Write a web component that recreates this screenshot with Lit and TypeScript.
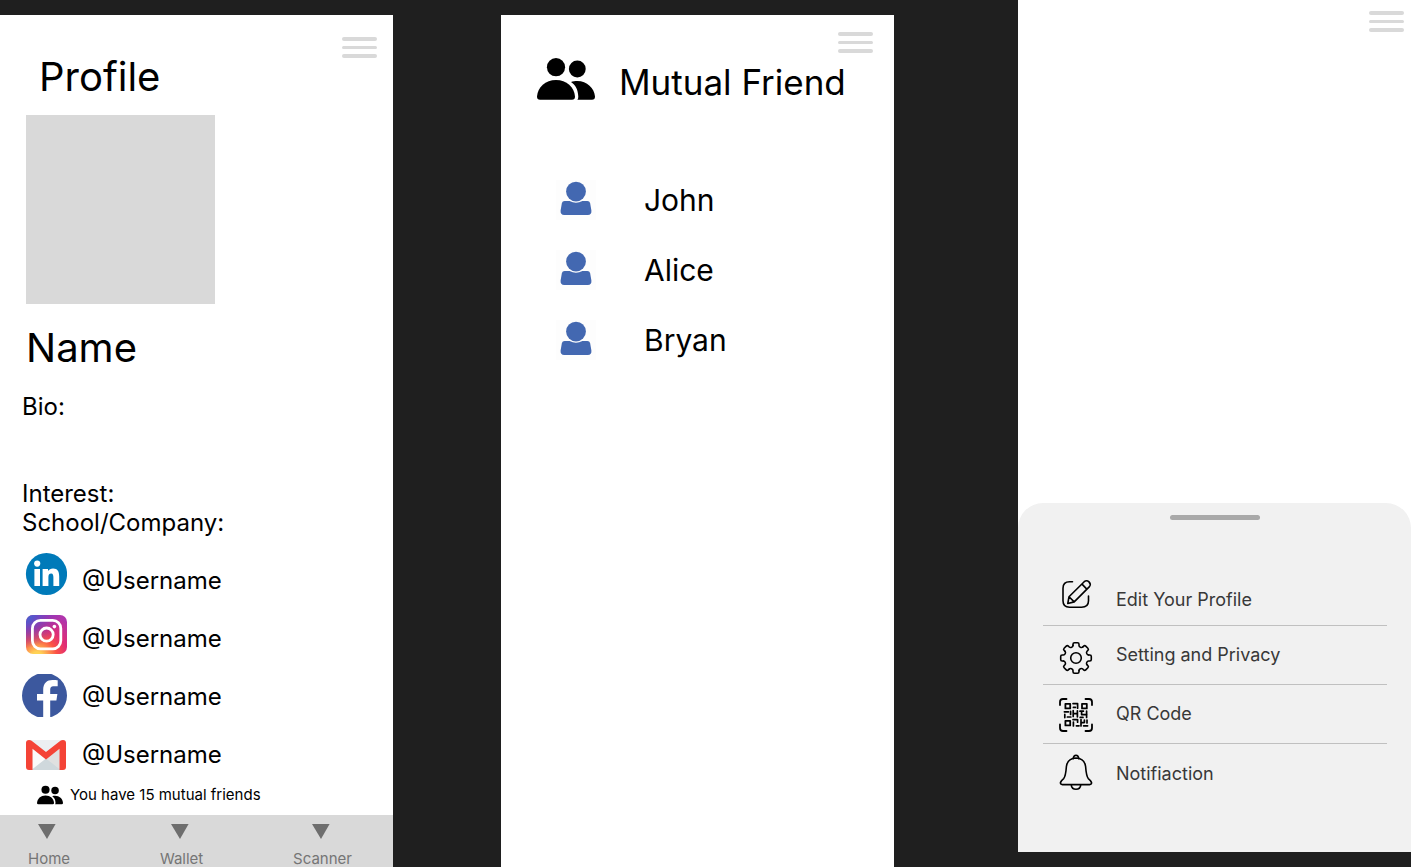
import { LitElement, html, css, svg, TemplateResult } from "lit";
import { customElement, property } from "lit/decorators.js";

const peopleIcon = html`<svg class="people" viewBox="0 0 58 42" aria-hidden="true">
  <circle cx="19" cy="9.2" r="9.1" />
  <circle cx="40.3" cy="11" r="8.4" />
  <path d="M3 41.8Q0 41.8 0 38.6C.6 29 8.5 22 19 22S37.4 29 38 38.6Q38 41.8 35 41.8Z" />
  <path d="M34 24C36 23.2 38 22.9 40.3 22.9C50 22.9 57.4 30 58 38.6Q58 41.8 55 41.8H40.4Q41.4 40.5 41.3 38.4C41 31.5 38.5 27 34 24Z" />
</svg>`;

const personIcon = html`<svg class="person" viewBox="0 1 40 40" aria-hidden="true">
  <rect y="1" width="40" height="40" fill="#fdfdfd" />
  <circle cx="20" cy="12.6" r="9.9" fill="#4368b1" />
  <path fill="#4368b1" d="M8.6 22H13.6Q20 25.6 26.4 22H31.4Q33.6 22 34.1 24L35.4 31.6Q35.8 36 31.8 36H8.2Q4.2 36 4.6 31.6L5.9 24Q6.4 22 8.6 22Z" />
</svg>`;

const arrowIcon = html`<svg class="arrow" viewBox="0 0 18 15" aria-hidden="true">
  <path d="M0 0H17.6L9 15Z" fill="#6e6e6e" />
</svg>`;

const linkedin = svg`
  <ellipse cx="24.5" cy="22" rx="20.6" ry="21" fill="#007ab9" />
  <circle cx="15.2" cy="11.6" r="3.1" fill="#fff" />
  <path fill="#fff" d="M12.4 17H18V34H12.4ZM20.6 17H26V19C27 17.4 28.8 16.4 31 16.4C35.8 16.4 37.2 19.6 37.2 24.2V34H31.4V25.4C31.4 23.2 31 21.4 29.2 21.4C27 21.4 26.4 23 26.4 25.4V34H20.6Z" />`;

const instagram = svg`
  <defs>
    <radialGradient id="ig-warm" cx="0.27" cy="1.08" r="1.15">
      <stop offset="0" stop-color="#ffdd55" />
      <stop offset="0.12" stop-color="#ffd155" />
      <stop offset="0.42" stop-color="#fb5245" />
      <stop offset="0.65" stop-color="#e12c74" />
      <stop offset="1" stop-color="#b035ac" />
    </radialGradient>
    <radialGradient id="ig-cool" cx="-0.05" cy="-0.05" r="0.9">
      <stop offset="0" stop-color="#3771c8" />
      <stop offset="0.25" stop-color="#5558cc" />
      <stop offset="1" stop-color="#6a2fd0" stop-opacity="0" />
    </radialGradient>
  </defs>
  <rect x="4" y="5" width="41" height="39" rx="7" fill="url(#ig-warm)" />
  <rect x="4" y="5" width="41" height="39" rx="7" fill="url(#ig-cool)" />
  <rect x="10.4" y="10.4" width="28.4" height="28.4" rx="8" fill="none" stroke="#fff" stroke-width="2.8" />
  <circle cx="24.6" cy="24.6" r="6.6" fill="none" stroke="#fff" stroke-width="2.8" />
  <circle cx="32.4" cy="16.6" r="1.8" fill="#fff" />`;

const facebook = svg`
  <clipPath id="fb-clip"><rect y="6" width="45" height="43" /></clipPath>
  <g clip-path="url(#fb-clip)">
    <circle cx="22.5" cy="27.5" r="22.5" fill="#3c589e" />
    <path fill="#fff" d="M21.2 50V32.6H15V26H21.2V21.6C21.2 15 25 11.9 30.4 11.9C33 11.9 35 12.1 35.7 12.2V18.2H32C28.9 18.2 28.2 19.6 28.2 21.9V26H35.4L34.4 32.6H28.2V50Z" />
  </g>`;

const gmail = svg`
  <path fill="#eceff1" d="M8 14H40V44H8Z" />
  <path fill="#cfd8dc" d="M9 44L24 31L39 44Z" />
  <path fill="#fafafa" d="M10.5 22.5V43L24 32.5Z" />
  <path fill="#e0e0e0" d="M37.5 22.5V43L24 32.5Z" />
  <path fill="#f44336" d="M10.5 44H7Q4 44 4 41V17Q4 14 7 14Q8.6 14 9.6 14.8L24 26L38.4 14.8Q39.4 14 41 14Q44 14 44 17V41Q44 44 41 44H37.5V22.8L24 33.4L10.5 22.8Z" />`;

const edit = svg`
  <path d="M13.5 4.8H10.5Q4 4.8 4 11.3V23.8Q4 30.3 10.5 30.3H22.5Q29.5 30.3 29.5 23.8V19.1" />
  <path d="M8.8 26.5L10 19.7L25.2 4.7Q27.6 2.7 30 4.9Q32.4 7.5 30.2 9.9L15.2 24.9ZM23 7.1L27.8 12.1M10 19.7L15.2 24.9" />`;

const gearTooth = "M-3 -12.6V-13.8Q-3 -15.3 -1.5 -15.3H1.5Q3 -15.3 3 -13.8V-12.6C3 -10.9 5.6 -9.8 6.79 -11.03";
const gear = svg`
  <g transform="translate(17 26)">
    <circle r="5.3" />
    ${[0, 45, 90, 135, 180, 225, 270, 315].map((turn) => svg`<path d=${gearTooth} transform="rotate(${turn})" />`)}
  </g>`;

const qr = svg`
  <g transform="translate(0 1)">
    <path stroke-width="1.8" d="M1 13V10Q1 7 4 7H7.5M26.5 7H30Q33 7 33 10V13M33 32.5V36Q33 39 30 39H26.5M7.5 39H4Q1 39 1 36V32.5" />
    <path stroke-width="1.8" d="M6.4 11.8H11.2V16.4H6.4ZM23 11.8H27.8V16.4H23ZM6.4 28.8H11.2V33.4H6.4Z" />
    <path stroke-width="1.7" d="M14 11.6H18.6V16.2M14.4 15.4H16.4M5.4 19.8H9.4M11.6 19.4V22.4M5.8 22.4V25.6M8.4 25H11.8M14.2 18.6V24.4M14.2 21.6H18M18.4 18.8V24.8M21 19.2H24.4M22.6 19.2V22.6H27.8M27.6 19V25.4M24 25.4H21.2M14 27.6H18.6V30.2M14.4 30V34M17.4 33.8H20M22 27.6V34M22 30.6H25M25.4 28V30.4M28 28V31M24.6 33.8H28.6" />
  </g>`;

const bell = svg`
  <g transform="translate(0 -2)">
    <path d="M14.3 9.6Q14.6 6.2 17 6.2T19.7 9.6" />
    <path d="M17 9Q25.6 9.4 26.6 17.5Q27.3 27 29.3 29.6Q32.8 32.4 32.6 34.2Q32.4 35.6 30.6 35.6H3.4Q1.6 35.6 1.4 34.2Q1.2 32.4 4.7 29.6Q6.7 27 7.4 17.5Q8.4 9.4 17 9ZM12.2 35.8Q12.8 40.3 17 40.3T21.8 35.8" />
  </g>`;

@customElement("menu-button")
export class MenuButton extends LitElement {
  static styles = css`
    :host { display: block; }
    .button {
      display: block;
      padding: 0;
      border: 0;
      background: none;
      cursor: pointer;
    }
    .bars { display: block; width: 35px; height: 21px; fill: #d9d9d9; }
  `;

  render() {
    return html`<button class="button" type="button" aria-label="Menu">
      <svg class="bars" viewBox="0 0 35 21" aria-hidden="true">
        <rect width="35" height="4" rx="2" />
        <rect y="9" width="35" height="3" rx="1.5" />
        <rect y="17" width="35" height="4" rx="2" />
      </svg>
    </button>`;
  }
}

@customElement("app-root")
export class AppRoot extends LitElement {
  @property({ type: Array }) friends = ["John", "Alice", "Bryan"];

  static styles = css`
    :host {
      display: grid;
      grid-template-columns: 393fr 108fr 393fr 124fr 393fr;
      min-height: 100vh;
      background: #1f1f1f;
      color: #000;
      font-family: Inter, "Liberation Sans", sans-serif;
    }
    * { box-sizing: border-box; }
    a { color: inherit; text-decoration: none; }
    h1, h2, p, ul { margin: 0; padding: 0; font-weight: 400; }
    ul { list-style: none; }
    svg { display: block; flex: none; }

    .screen { display: flex; flex-direction: column; background: #fff; min-width: 0; }
    .profile { grid-column: 1; margin-top: 15px; }
    .mutual { grid-column: 3; margin-top: 15px; }
    .settings { grid-column: 5; margin-bottom: 15px; }

    .profile-head {
      display: flex;
      justify-content: space-between;
      padding: 22px 16px 0 39px;
    }
    .title { font-size: 40px; line-height: 48px; }
    .profile-head .title { padding-top: 16px; }
    .profile-body { display: flex; flex-direction: column; padding: 14px 22px 0; }
    .photo { width: 189px; height: 189px; margin-left: 4px; background: #d9d9d9; }
    .name { margin: 20px 0 20px 4px; }
    .fact { font-size: 24px; line-height: 29px; }
    .bio { min-height: 87px; }
    .socials { padding-top: 14px; }
    .social {
      display: flex;
      align-items: center;
      gap: 15px;
      height: 58px;
      font-size: 24px;
      line-height: 29px;
    }
    .brand { width: 45px; height: 58px; }
    .people { fill: #000; }
    .shared {
      display: flex;
      align-items: center;
      gap: 7px;
      padding-left: 15px;
      height: 24px;
      font-size: 15px;
      line-height: 18px;
    }
    .shared .people { width: 26px; height: 20px; }
    .tabs {
      display: flex;
      justify-content: space-between;
      margin-top: auto;
      padding: 9px 41px 0 28px;
      background: #d9d9d9;
    }
    .tab {
      display: flex;
      flex-direction: column;
      align-items: center;
      gap: 12px;
      color: #757575;
      font-size: 15px;
      line-height: 16px;
    }
    .arrow { width: 18px; height: 15px; margin-right: 4px; }

    .mutual-top { display: flex; justify-content: flex-end; padding: 17px 21px 0; }
    .mutual-head { display: flex; align-items: flex-start; gap: 24px; padding: 5px 36px 0; }
    .mutual-head .people { width: 58px; height: 42px; }
    .mutual-title { font-size: 35px; line-height: 48px; white-space: nowrap; }
    .friends { padding: 59px 55px 0; }
    .friend {
      display: flex;
      align-items: center;
      gap: 48px;
      height: 70px;
      font-size: 30px;
      line-height: 36px;
    }
    .person { width: 40px; height: 40px; }

    .settings-top { display: flex; justify-content: flex-end; padding: 11px 7px 0; }
    .sheet {
      display: flex;
      flex-direction: column;
      margin-top: auto;
      padding: 12px 24px 49px 25px;
      border-radius: 25px 25px 0 0;
      background: #f1f1f1;
    }
    .grip { align-self: center; width: 90px; height: 5px; border-radius: 3px; background: #a9a9a9; }
    .options { padding-top: 47px; }
    .option { height: 59px; border-bottom: 1px solid #c0c0c0; }
    .option:first-child { padding-top: 8px; }
    .option:last-child { border-bottom: 0; }
    .option-button {
      display: flex;
      align-items: center;
      gap: 23px;
      width: 100%;
      height: 100%;
      padding: 0 16px;
      border: 0;
      background: none;
      color: #383838;
      font: inherit;
      font-size: 18px;
      line-height: 22px;
      text-align: left;
      cursor: pointer;
    }
    .option-icon {
      width: 34px;
      height: 46px;
      fill: none;
      stroke: #000;
      stroke-width: 1.6;
      stroke-linejoin: round;
      stroke-linecap: round;
    }
  `;

  private social(label: string, logo: TemplateResult<2>) {
    return html`<li>
      <a class="social" href="#" aria-label=${label}>
        <svg class="brand" viewBox="0 -1 45 58" aria-hidden="true">${logo}</svg>
        <span>@Username</span>
      </a>
    </li>`;
  }

  private tab(label: string) {
    return html`<a class="tab" href="#">${arrowIcon}<span>${label}</span></a>`;
  }

  private option(label: string, icon: TemplateResult<2>) {
    return html`<li class="option">
      <button class="option-button" type="button">
        <svg class="option-icon" viewBox="0 0 34 46" aria-hidden="true">${icon}</svg>
        <span>${label}</span>
      </button>
    </li>`;
  }

  render() {
    return html`
      <section class="screen profile">
        <header class="profile-head">
          <h1 class="title">Profile</h1>
          <menu-button></menu-button>
        </header>
        <div class="profile-body">
          <div class="photo"></div>
          <h2 class="title name">Name</h2>
          <p class="fact bio">Bio:</p>
          <p class="fact">Interest:</p>
          <p class="fact">School/Company:</p>
          <ul class="socials">
            ${this.social("LinkedIn @Username", linkedin)}
            ${this.social("Instagram @Username", instagram)}
            ${this.social("Facebook @Username", facebook)}
            ${this.social("Gmail @Username", gmail)}
          </ul>
          <a class="shared" href="#">${peopleIcon}<span>You have 15 mutual friends</span></a>
        </div>
        <nav class="tabs">${this.tab("Home")}${this.tab("Wallet")}${this.tab("Scanner")}</nav>
      </section>

      <section class="screen mutual">
        <div class="mutual-top"><menu-button></menu-button></div>
        <header class="mutual-head">
          ${peopleIcon}
          <h1 class="mutual-title">Mutual Friend</h1>
        </header>
        <ul class="friends">
          ${this.friends.map((name) => html`<li class="friend">${personIcon}<span>${name}</span></li>`)}
        </ul>
      </section>

      <section class="screen settings">
        <div class="settings-top"><menu-button></menu-button></div>
        <div class="sheet">
          <div class="grip"></div>
          <ul class="options">
            ${this.option("Edit Your Profile", edit)}
            ${this.option("Setting and Privacy", gear)}
            ${this.option("QR Code", qr)}
            ${this.option("Notifiaction", bell)}
          </ul>
        </div>
      </section>
    `;
  }
}
